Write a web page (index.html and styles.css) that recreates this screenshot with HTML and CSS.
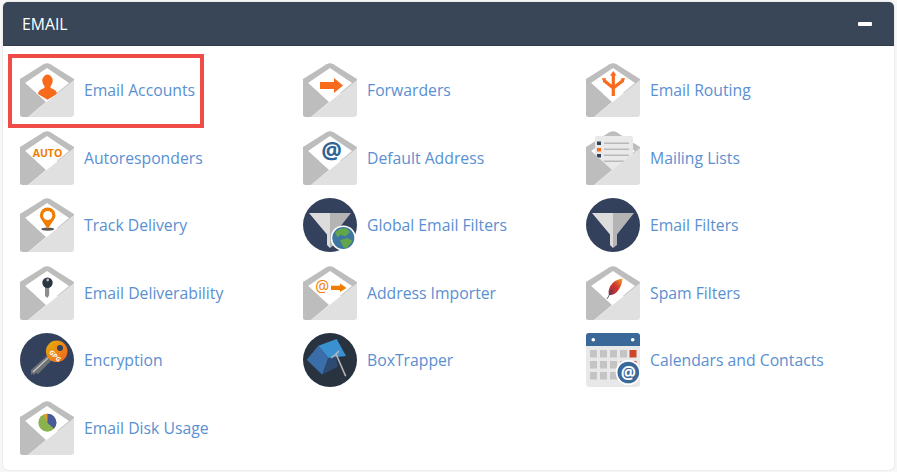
FILE: index.html
```html
<!DOCTYPE html>
<html lang="en">
<head>
<meta charset="utf-8">
<title>Email</title>
<link rel="stylesheet" href="styles.css">
</head>
<body>
<svg class="defs" aria-hidden="true">
  <defs>
    <symbol id="env-back" viewBox="0 0 54 54">
      <path d="M0 16 L23.5 1.2 Q27 -0.8 30.5 1.2 L54 16 V30 H0Z" fill="#bdbdbd"/>
      <path d="M5 20 L27 5 L49 20 L26 39Z" fill="#fff"/>
    </symbol>
    <symbol id="env-front" viewBox="0 0 54 54">
      <path d="M0 15.5 L26 39 L8 54 H2.5 Q0 54 0 51.5Z" fill="#bdbdbd"/>
      <path d="M54 17 V51 Q54 54 51 54 H8 Z" fill="#e0e0e0"/>
    </symbol>
    <symbol id="funnel" viewBox="0 0 54 54">
      <circle cx="27" cy="27" r="27" fill="#33415c"/>
      <path d="M6 15 H27 V50 L24 47 V36.5Z" fill="#dcdcdc"/>
      <path d="M48 15 H27 V50 L31 47 V36.5Z" fill="#b4b4b4"/>
    </symbol>
  </defs>
</svg>

<section class="panel">
  <header class="panel-head">
    <h2 class="panel-title">EMAIL</h2>
    <span class="collapse"></span>
  </header>
  <ul class="tools">
    <li class="tool tool-marked">
      <svg class="icon" viewBox="0 0 54 54"><use href="#env-back"/>
        <ellipse cx="27.5" cy="17.8" rx="5.2" ry="6.2" fill="#f96b1c"/>
        <path d="M24.8 22 L24.3 25 Q18 27 18 31 L27.5 36.8 L37 31 Q37 27 30.7 25 L30.2 22Z" fill="#f96b1c"/>
        <use href="#env-front"/></svg>
      <a class="tool-link" href="#">Email Accounts</a>
      <span class="marker"></span>
    </li>
    <li class="tool">
      <svg class="icon" viewBox="0 0 54 54"><use href="#env-back"/>
        <path d="M17 19 H31 V15 L40 22.5 L31 30 V26 H17Z" fill="#f96b1c"/>
        <use href="#env-front"/></svg>
      <a class="tool-link" href="#">Forwarders</a>
    </li>
    <li class="tool">
      <svg class="icon" viewBox="0 0 54 54"><use href="#env-back"/>
        <path d="M27.3 33 V11 M27.3 25 L18 17.5 M27.3 25 L37 17.5" fill="none" stroke="#f96b1c" stroke-width="3.2"/>
        <path d="M27.3 8 L30.5 12.5 H24Z M16 15 L20.5 15.5 L17.5 19.5Z M39 15 L34.5 15.5 L37.5 19.5Z" fill="#f96b1c"/>
        <use href="#env-front"/></svg>
      <a class="tool-link" href="#">Email Routing</a>
    </li>
    <li class="tool">
      <svg class="icon" viewBox="0 0 54 54"><use href="#env-back"/>
        <text class="icon-auto" x="27.5" y="25.5" text-anchor="middle">AUTO</text>
        <use href="#env-front"/></svg>
      <a class="tool-link" href="#">Autoresponders</a>
    </li>
    <li class="tool">
      <svg class="icon" viewBox="0 0 54 54"><use href="#env-back"/>
        <text class="icon-at" x="28.5" y="28" text-anchor="middle">@</text>
        <use href="#env-front"/></svg>
      <a class="tool-link" href="#">Default Address</a>
    </li>
    <li class="tool">
      <svg class="icon" viewBox="0 0 54 54"><use href="#env-back"/>
        <rect x="9" y="5" width="38" height="34" rx="1.5" fill="#e9e9e9"/>
        <rect x="11" y="10.5" width="4" height="3.5" fill="#33415c"/>
        <rect x="11" y="17" width="4" height="3.5" fill="#f96b1c"/>
        <rect x="11" y="23" width="4" height="3.5" fill="#33415c"/>
        <path d="M18 12.3 H43 M18 18.3 H43 M18 24.3 H43 M18 30.3 H40" stroke="#b9b9b9" stroke-width="1.4"/>
        <use href="#env-front"/></svg>
      <a class="tool-link" href="#">Mailing Lists</a>
    </li>
    <li class="tool">
      <svg class="icon" viewBox="0 0 54 54"><use href="#env-back"/>
        <ellipse cx="27.7" cy="31.2" rx="6.5" ry="1.6" fill="#555"/>
        <path d="M27.7 31 L22.2 22.8 A7.8 7.8 0 1 1 33.2 22.8Z" fill="#f07c00"/>
        <circle cx="27.7" cy="17.5" r="4.6" fill="#fff"/>
        <use href="#env-front"/></svg>
      <a class="tool-link" href="#">Track Delivery</a>
    </li>
    <li class="tool">
      <svg class="icon" viewBox="0 0 54 54"><use href="#funnel"/>
        <circle cx="40.3" cy="40" r="12.6" fill="#fff"/>
        <circle cx="40.3" cy="40" r="11" fill="#3d76a0"/>
        <path d="M32 34 Q38 29 44 30.5 L47 34 L42 38.5 L38 36.5 L34.5 39.5Z M37 42 L44.5 40 L49.5 43 L44 50 L40.5 49.5Z" fill="#63a64a"/>
      </svg>
      <a class="tool-link" href="#">Global Email Filters</a>
    </li>
    <li class="tool">
      <svg class="icon" viewBox="0 0 54 54"><use href="#funnel"/></svg>
      <a class="tool-link" href="#">Email Filters</a>
    </li>
    <li class="tool">
      <svg class="icon" viewBox="0 0 54 54"><use href="#env-back"/>
        <path d="M25 20 H29.2 V29 L27.5 32 L25 30Z" fill="#8a8f94"/>
        <circle cx="27.5" cy="16.7" r="5.2" fill="#2c3542"/>
        <circle cx="27.7" cy="14" r="1.4" fill="#b4bbc6"/>
        <use href="#env-front"/></svg>
      <a class="tool-link" href="#">Email Deliverability</a>
    </li>
    <li class="tool">
      <svg class="icon" viewBox="0 0 54 54"><use href="#env-back"/>
        <text class="icon-at-small" x="19.3" y="26" text-anchor="middle">@</text>
        <path d="M28 19.7 H37 V17.5 L43.5 22 L37 26 V24 H28Z" fill="#f07c00"/>
        <use href="#env-front"/></svg>
      <a class="tool-link" href="#">Address Importer</a>
    </li>
    <li class="tool">
      <svg class="icon" viewBox="0 0 54 54">
        <defs><linearGradient id="feather" x1="0" y1="1" x2="1" y2="0"><stop offset="0" stop-color="#8e2a4e"/><stop offset=".55" stop-color="#d6392b"/><stop offset="1" stop-color="#f2a52c"/></linearGradient></defs>
        <use href="#env-back"/>
        <path d="M36.5 12.5 Q28 13.5 24 20.5 Q22 24.5 22.8 29 Q29 29.5 32.5 24 Q36 19 36.5 12.5Z" fill="url(#feather)"/>
        <path d="M21 33 L26.5 23.5" stroke="#3a3f55" stroke-width=".8"/>
        <use href="#env-front"/></svg>
      <a class="tool-link" href="#">Spam Filters</a>
    </li>
    <li class="tool">
      <svg class="icon" viewBox="0 0 54 54">
        <defs><linearGradient id="gpg" x1="0" y1="0" x2="1" y2="1"><stop offset="0" stop-color="#e5b10c"/><stop offset="1" stop-color="#f2601f"/></linearGradient></defs>
        <circle cx="27" cy="27" r="27" fill="#33415c"/>
        <path d="M30 20 L34 25 L18 41 L15.5 40 L14 42 L12 40.5 L11 42.5 L11 37Z" fill="#6d7277"/>
        <path d="M28 25 L13 39" stroke="#c9c9c9" stroke-width="1.2"/>
        <circle cx="36.7" cy="18.3" r="10.8" fill="url(#gpg)"/>
        <circle cx="40" cy="15" r="3" fill="#33415c"/>
        <text class="icon-gpg" transform="translate(33.5 24.5) rotate(45)" text-anchor="middle" x="0" y="0">GPG</text>
      </svg>
      <a class="tool-link" href="#">Encryption</a>
    </li>
    <li class="tool">
      <svg class="icon" viewBox="0 0 54 54">
        <circle cx="27" cy="27" r="27" fill="#28333f"/>
        <path d="M15.3 12.7 L33.7 6 L43 23 L25.3 25Z" fill="#3a90d0"/>
        <path d="M15.3 12.7 L3.7 26.7 L19.3 41.7 L25.3 25Z" fill="#3b6ea8"/>
        <path d="M25.3 25 L19.3 41.7 L35 33.5 L33 24Z" fill="#2d4a72"/>
        <path d="M33 21 L42.7 43.3 M33 21 L28 25 M33 21 L36 18" fill="none" stroke="#b8b8b8" stroke-width="1.6"/>
      </svg>
      <a class="tool-link" href="#">BoxTrapper</a>
    </li>
    <li class="tool">
      <svg class="icon" viewBox="0 0 54 54">
        <rect y="0" width="54" height="54" rx="3" fill="#e8e8e8"/>
        <path d="M0 13 V3 Q0 0 3 0 H51 Q54 0 54 3 V13Z" fill="#3a6899"/>
        <circle cx="7.3" cy="6.7" r="1.8" fill="#fff"/>
        <circle cx="46.7" cy="6.7" r="1.8" fill="#fff"/>
        <g fill="#c4c4c4">
          <rect x="4" y="17" width="7" height="7.5"/><rect x="14" y="17" width="7" height="7.5"/><rect x="24" y="17" width="7" height="7.5"/><rect x="34" y="17" width="7" height="7.5"/>
          <rect x="4" y="28" width="7" height="7.5"/><rect x="14" y="28" width="7" height="7.5"/><rect x="24" y="28" width="7" height="7.5"/><rect x="34" y="28" width="7" height="7.5"/><rect x="43.5" y="28" width="7" height="7.5" fill="#c9523c"/>
          <rect x="4" y="39" width="7" height="7.5"/><rect x="14" y="39" width="7" height="7.5"/><rect x="24" y="39" width="7" height="7.5"/>
        </g>
        <rect x="43.5" y="17" width="7" height="7.5" fill="#cf4528"/>
        <circle cx="42.3" cy="39.5" r="12.6" fill="#fff"/>
        <circle cx="42.3" cy="39.5" r="10.8" fill="#3a6899"/>
        <text class="icon-at-cal" x="42.3" y="45.5" text-anchor="middle">@</text>
      </svg>
      <a class="tool-link" href="#">Calendars and Contacts</a>
    </li>
    <li class="tool">
      <svg class="icon" viewBox="0 0 54 54"><use href="#env-back"/>
        <circle cx="27.3" cy="21.7" r="9" fill="#8ab24f"/>
        <path d="M27.3 21.7 V12.7 A9 9 0 0 1 34 27.7Z" fill="#4a5a96"/>
        <path d="M27.3 21.7 V12.7 A9 9 0 0 0 23.5 13.5Z" fill="#e0a030"/>
        <use href="#env-front"/></svg>
      <a class="tool-link" href="#">Email Disk Usage</a>
    </li>
  </ul>
</section>
</body>
</html>
```
FILE: styles.css
```css
* { box-sizing: border-box; }

html, body { height: 100%; }

body {
  margin: 0;
  padding: 2px 3px;
  background: #f7f7f7;
  font-family: "Open Sans", "Liberation Sans", sans-serif;
  overflow: hidden;
}

.defs { display: none; }

.panel {
  height: 468px;
  background: #fff;
  border-radius: 5px;
  box-shadow: 0 0 2px rgba(0, 0, 0, 0.15);
  overflow: hidden;
}

.panel-head {
  height: 44px;
  padding: 0 22px 0 19px;
  display: flex;
  align-items: center;
  justify-content: space-between;
  background: #384657;
  border-bottom: 1px solid #2f3b4a;
}

.panel-title {
  margin: 0;
  font-size: 15.75px;
  font-weight: 400;
  color: #fff;
}

.collapse {
  width: 14px;
  height: 4px;
  background: #fff;
  border-radius: 1px;
}

.tools {
  list-style: none;
  margin: 0;
  padding: 17px 0 0 17px;
  display: grid;
  grid-template-columns: repeat(3, 283px);
  grid-auto-rows: 67.5px;
}

.tool {
  position: relative;
  display: flex;
  align-items: flex-start;
  gap: 10px;
}

.icon {
  width: 54px;
  height: 54px;
  flex: none;
}

.tool-link {
  margin-top: 16px;
  font-size: 15.75px;
  line-height: 22px;
  color: #5a90d2;
  text-decoration: none;
  white-space: nowrap;
}

.marker {
  position: absolute;
  left: -12px;
  top: -9px;
  width: 196px;
  height: 74px;
  border: 4px solid #ef4b47;
}

.icon-auto {
  font: 700 10.5px "Open Sans", sans-serif;
  fill: #f07c00;
}

.icon-at {
  font: 700 23px "Open Sans", sans-serif;
  fill: #2f6496;
}

.icon-at-small {
  font: 400 15.5px "Open Sans", sans-serif;
  fill: #f07c00;
}

.icon-at-cal {
  font: 700 17px "Open Sans", sans-serif;
  fill: #fff;
}

.icon-gpg {
  font: 700 6.5px "Open Sans", sans-serif;
  fill: #fff;
}
```
